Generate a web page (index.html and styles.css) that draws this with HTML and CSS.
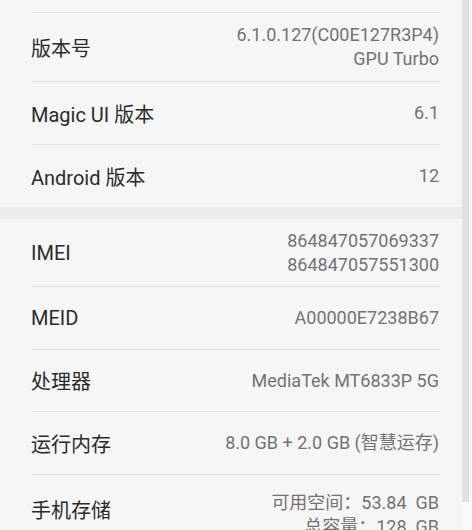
FILE: index.html
```html
<!DOCTYPE html>
<html lang="zh-CN">
<head>
<meta charset="UTF-8" />
<meta name="viewport" content="width=device-width, initial-scale=1" />
<title>关于手机</title>
<link rel="stylesheet" href="styles.css">
</head>
<body>
  <div class="screen">
    <div class="list">
      <div class="group">
        <div class="row cut"></div>
        <div class="row tall top">
          <div class="label">版本号</div>
          <div class="value">6.1.0.127(C00E127R3P4)<br>GPU Turbo</div>
        </div>
        <div class="row">
          <div class="label">Magic UI 版本</div>
          <div class="value">6.1</div>
        </div>
        <div class="row last">
          <div class="label">Android 版本</div>
          <div class="value">12</div>
        </div>
      </div>
      <div class="gap"></div>
      <div class="group">
        <div class="row tall imei">
          <div class="label">IMEI</div>
          <div class="value">864847057069337<br>864847057551300</div>
        </div>
        <div class="row">
          <div class="label">MEID</div>
          <div class="value">A00000E7238B67</div>
        </div>
        <div class="row cpu">
          <div class="label">处理器</div>
          <div class="value">MediaTek MT6833P 5G</div>
        </div>
        <div class="row">
          <div class="label">运行内存</div>
          <div class="value">8.0 GB + 2.0 GB (智慧运存)</div>
        </div>
        <div class="row tall last">
          <div class="label">手机存储</div>
          <div class="value">可用空间：53.84&nbsp; GB<br>总容量：128&nbsp; GB</div>
        </div>
      </div>
    </div>
    <div class="scrollbar">
      <div class="thumb"></div>
    </div>
  </div>
</body>
</html>
```
FILE: styles.css
```css
body {
  margin: 0;
  background: #f6f6f6;
  font-family: Roboto, "Noto Sans CJK SC", sans-serif;
  overflow: hidden;
}
.screen {
  display: flex;
  height: 530px;
}
.list {
  flex: 1;
}
.group {
  background: #f6f6f6;
}
.gap {
  height: 12px;
  background: #ececec;
}
.row {
  display: flex;
  align-items: center;
  justify-content: space-between;
  height: 62px;
  margin: 0 21px 0 31px;
  padding-right: 2px;
  border-bottom: 1px solid #e4e4e4;
}
.row.cut {
  height: 12px;
}
.row.tall {
  height: 68px;
}
.row.imei {
  height: 67px;
}
.row.cpu {
  height: 61px;
}
.row.last {
  border-bottom: none;
}
.label {
  font-size: 20px;
  color: #2b2b2b;
}
.value {
  font-size: 18px;
  line-height: 24px;
  color: #737373;
  text-align: right;
}
.row.last.tall .value {
  margin-top: 12px;
}
.scrollbar {
  width: 10px;
  display: flex;
  background: #fafafa;
}
.thumb {
  width: 6px;
  height: 502px;
  background: #e2e2e2;
  border-right: 1px solid #d8d8d8;
}
```
